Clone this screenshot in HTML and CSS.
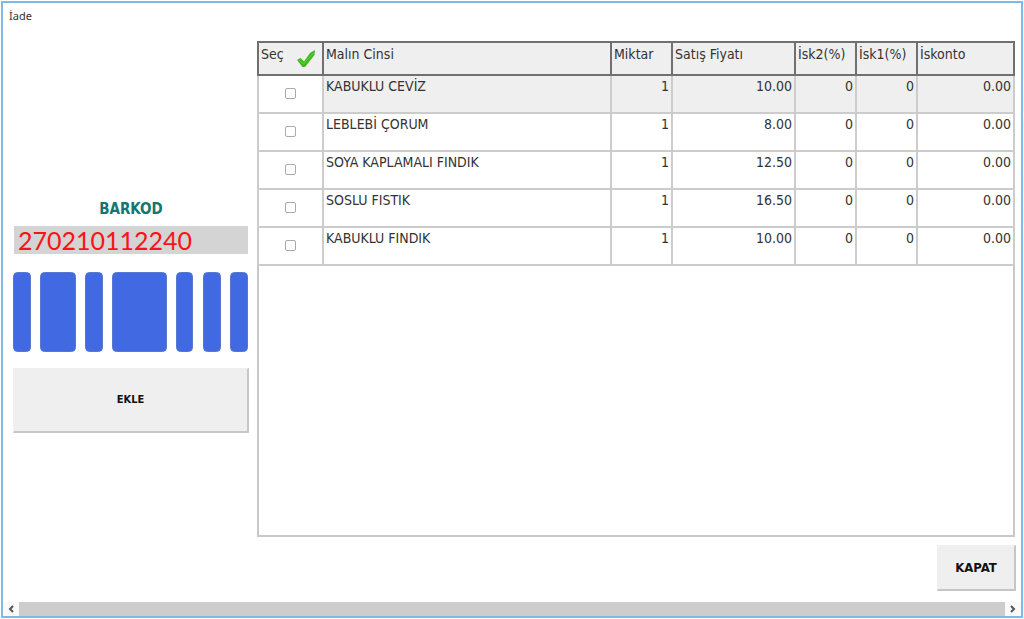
FILE: index.html
```
<!DOCTYPE html>
<html lang="tr">
<head>
<meta charset="utf-8">
<title>İade</title>
<link rel="stylesheet" href="styles.css">
</head>
<body>
<main class="window">
  <h1 class="window-title">İade</h1>
  <div class="content">
    <section class="entry">
      <label class="barcode-label" for="barcode">BARKOD</label>
      <input class="barcode-input" id="barcode" type="text" value="270210112240">
      <svg class="barcode" viewBox="0 0 236 80" preserveAspectRatio="none" aria-hidden="true">
        <g fill="#4169e1" stroke="#5878cf" stroke-width="1">
          <rect x=".5" y=".5" width="17" height="79" rx="4"/>
          <rect x="27.500" y=".5" width="35" height="79" rx="4"/>
          <rect x="72.500" y=".5" width="17" height="79" rx="4"/>
          <rect x="99.500" y=".5" width="54" height="79" rx="4"/>
          <rect x="163.500" y=".5" width="16" height="79" rx="4"/>
          <rect x="190.500" y=".5" width="17" height="79" rx="4"/>
          <rect x="217.500" y=".5" width="17" height="79" rx="4"/>
        </g>
      </svg>
      <button class="button add" type="button">EKLE</button>
    </section>
    <section class="items">
      <table class="grid">
        <colgroup>
          <col class="col-select"><col><col class="col-small"><col class="col-price"><col class="col-small"><col class="col-small"><col class="col-discount">
        </colgroup>
        <thead>
          <tr>
            <th><div class="select-head"><span>Seç</span>
              <svg class="check" viewBox="0 0 20 18" aria-hidden="true"><path d="M1 10L4.500 8L8 11.500L14 3L19 0L18.500 5L9 17H6.500Z" fill="#3fb81c"/><path d="M3 10L7.500 14L17.500 3" fill="none" stroke="#62d83a" stroke-width="1"/></svg></div></th>
            <th>Malın Cinsi</th><th>Miktar</th><th>Satış Fiyatı</th><th>İsk2(%)</th><th>İsk1(%)</th><th>İskonto</th>
          </tr>
        </thead>
        <tbody>
          <tr class="current"><td class="select"><input type="checkbox" aria-label="KABUKLU CEVİZ"></td><td>KABUKLU CEVİZ</td><td class="num">1</td><td class="num">10.00</td><td class="num">0</td><td class="num">0</td><td class="num">0.00</td></tr>
          <tr><td class="select"><input type="checkbox" aria-label="LEBLEBİ ÇORUM"></td><td>LEBLEBİ ÇORUM</td><td class="num">1</td><td class="num">8.00</td><td class="num">0</td><td class="num">0</td><td class="num">0.00</td></tr>
          <tr><td class="select"><input type="checkbox" aria-label="SOYA KAPLAMALI FINDIK"></td><td>SOYA KAPLAMALI FINDIK</td><td class="num">1</td><td class="num">12.50</td><td class="num">0</td><td class="num">0</td><td class="num">0.00</td></tr>
          <tr><td class="select"><input type="checkbox" aria-label="SOSLU FISTIK"></td><td>SOSLU FISTIK</td><td class="num">1</td><td class="num">16.50</td><td class="num">0</td><td class="num">0</td><td class="num">0.00</td></tr>
          <tr><td class="select"><input type="checkbox" aria-label="KABUKLU FINDIK"></td><td>KABUKLU FINDIK</td><td class="num">1</td><td class="num">10.00</td><td class="num">0</td><td class="num">0</td><td class="num">0.00</td></tr>
        </tbody>
      </table>
    </section>
  </div>
  <footer class="actions"><button class="button close" type="button">KAPAT</button></footer>
  <div class="scrollbar">
    <button class="arrow" type="button" aria-label="Sola kaydır"><svg viewBox="0 0 6 8"><path d="M5 1L2 4L5 7"/></svg></button>
    <div class="thumb"></div>
    <button class="arrow" type="button" aria-label="Sağa kaydır"><svg viewBox="0 0 6 8"><path d="M1 1L4 4L1 7"/></svg></button>
  </div>
</main>
</body>
</html>
```
FILE: styles.css
```
* { box-sizing: border-box; }

body {
  margin: 0;
  padding: 1px;
  background: #fff;
  color: #333;
  font: 14px/16px "DejaVu Sans Condensed", "DejaVu Sans", sans-serif;
}

.window {
  display: flex;
  flex-direction: column;
  min-height: calc(100vh - 2px);
  border: 2px solid #7fb9e6;
}

.window-title {
  margin: 0;
  padding: 6px 6px 0;
  font: 11px/14px "Noto Sans", sans-serif;
}

.content {
  flex: 1;
  display: grid;
  grid-template-columns: 236px 1fr;
  gap: 8px;
  padding: 18px 6px 0 10px;
}

.entry {
  display: flex;
  flex-direction: column;
  padding-top: 160px;
}

.barcode-label {
  margin-bottom: 9px;
  text-align: center;
  color: #15756f;
  font-size: 15px;
  font-weight: bold;
}

.barcode-input {
  width: 100%;
  height: 28px;
  padding: 0 4px 1px;
  border: 0;
  border-left: 1px solid #fff;
  border-right: 1px solid #fff;
  background: #d4d4d4;
  color: #fb1218;
  font: 25px/27px Lato, sans-serif;
}

.barcode {
  width: 100%;
  height: 80px;
  margin: 18px 0 16px;
}

.button {
  border: 1px solid #efefef;
  border-right: 2px solid #c6c6c6;
  border-bottom: 2px solid #c6c6c6;
  background: #efefef;
  color: #111;
  font: bold 13px/16px "DejaVu Sans Condensed", sans-serif;
}

.add { height: 65px; font-size: 11px; }

.items {
  border: 2px solid #c8c8c8;
  border-top: 0;
}

.grid {
  width: calc(100% + 4px);
  margin: 0 -2px;
  border-collapse: collapse;
  table-layout: fixed;
}

.col-select { width: 65px; }
.col-small { width: 61px; }
.col-price { width: 123px; }
.col-discount { width: 97px; }

.grid th,
.grid td {
  padding: 3px 2px;
  border: 2px solid #ccc;
  vertical-align: top;
  text-align: left;
  font-weight: normal;
  white-space: nowrap;
}

.grid th {
  height: 33px;
  border-color: #707070;
  background: #efefef;
}

.grid td {
  height: 38px;
  padding-top: 2px;
}

.grid .num { text-align: right; }
.grid .current td { background: #efefef; }
.grid .current .select { background: #fff; }

.grid .select {
  vertical-align: middle;
  text-align: center;
}

.select input {
  appearance: none;
  display: block;
  width: 11px;
  height: 11px;
  margin: 0 auto;
  border: 1px solid #aaa;
  border-radius: 2px;
  background: #fff;
}

.select-head {
  display: flex;
  justify-content: space-between;
}

.check {
  width: 20px;
  height: 18px;
  margin: 4px 4px 0 0;
}

.actions {
  display: flex;
  justify-content: flex-end;
  padding: 8px 5px 11px;
}

.close { width: 79px; height: 46px; }

.scrollbar {
  display: flex;
  height: 14px;
}

.arrow {
  display: flex;
  align-items: center;
  justify-content: center;
  width: 16px;
  padding: 0;
  border: 0;
  background: #fafafa;
}

.arrow svg {
  width: 6px;
  height: 8px;
  fill: none;
  stroke: #555;
  stroke-width: 2;
}

.thumb {
  flex: 1;
  background: #cdcdcd;
}
```
